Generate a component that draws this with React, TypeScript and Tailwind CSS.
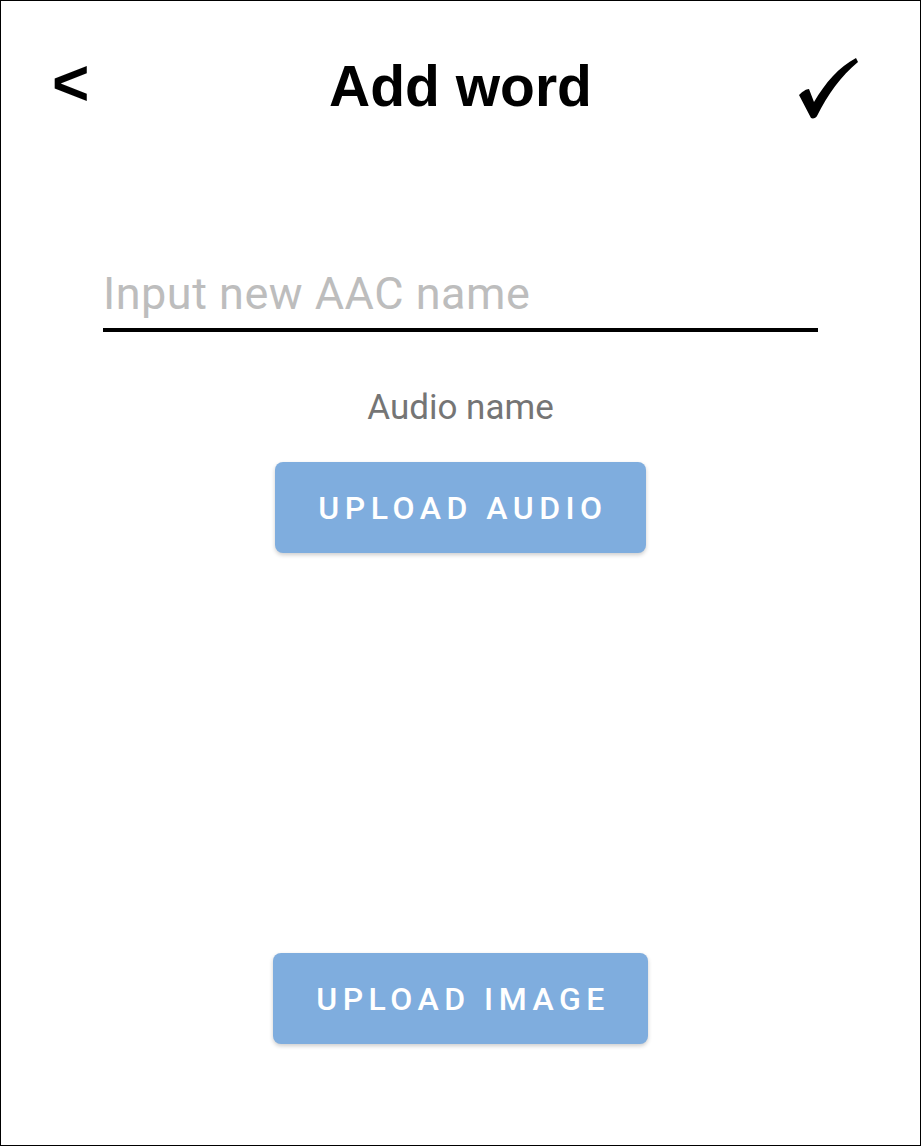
import React from "react";

export default function App() {
  return (
    <div className="w-[921px] h-[1146px] border border-black bg-white box-border flex flex-col items-center overflow-hidden">
      {/* Header */}
      <div className="w-full mt-[53px] h-[57px] grid grid-cols-[1fr_auto_1fr] items-center">
        <div className="pl-[51px] flex items-center">
          <span className="text-[64px] leading-none font-bold text-black -translate-y-[3px] [font-family:'Liberation_Sans',Arial,sans-serif]">&lt;</span>
        </div>
        <div className="text-[57px] leading-none font-bold text-black [font-family:'Liberation_Sans',Arial,sans-serif]">
          Add word
        </div>
        <div className="flex justify-end pr-[62px] items-center">
          <svg width="60" height="62" viewBox="0 0 60 62" aria-label="✓" className="translate-y-[2px]">
            <path d="M1,38 C4,35 8,32 11,32 L16,45 C27,26 41,10 58,1 L60,5 C43,19 30,37 19,59 C18,61 15,62 13,61 Z" fill="#000" />
          </svg>
        </div>
      </div>

      {/* Input */}
      <div className="mt-[158px] w-[715px] border-b-[4px] border-black pb-[9px]">
        <input
          className="w-full h-[50px] outline-none bg-transparent text-[45px] tracking-[0.5px] text-black placeholder:text-[#bdbdbd] [font-family:Roboto,sans-serif] p-0"
          placeholder="Input new AAC name"
        />
      </div>

      {/* Audio name */}
      <div className="mt-[55px] text-[35px] text-[#757575] [font-family:Roboto,sans-serif] leading-[41px]">
        Audio name
      </div>

      {/* Upload audio */}
      <button className="mt-[34px] h-[91px] pl-[43px] pr-[38px] rounded-[8px] bg-[#7fadde] text-white text-[32px] font-medium tracking-[5.5px] [font-family:Roboto,sans-serif] shadow-[0_2px_4px_rgba(0,0,0,0.2)] flex items-center justify-center">
        UPLOAD AUDIO
      </button>

      {/* Upload image */}
      <button className="mt-[400px] h-[91px] pl-[43px] pr-[38px] rounded-[8px] bg-[#7fadde] text-white text-[32px] font-medium tracking-[5.5px] [font-family:Roboto,sans-serif] shadow-[0_2px_4px_rgba(0,0,0,0.2)] flex items-center justify-center">
        UPLOAD IMAGE
      </button>
    </div>
  );
}
